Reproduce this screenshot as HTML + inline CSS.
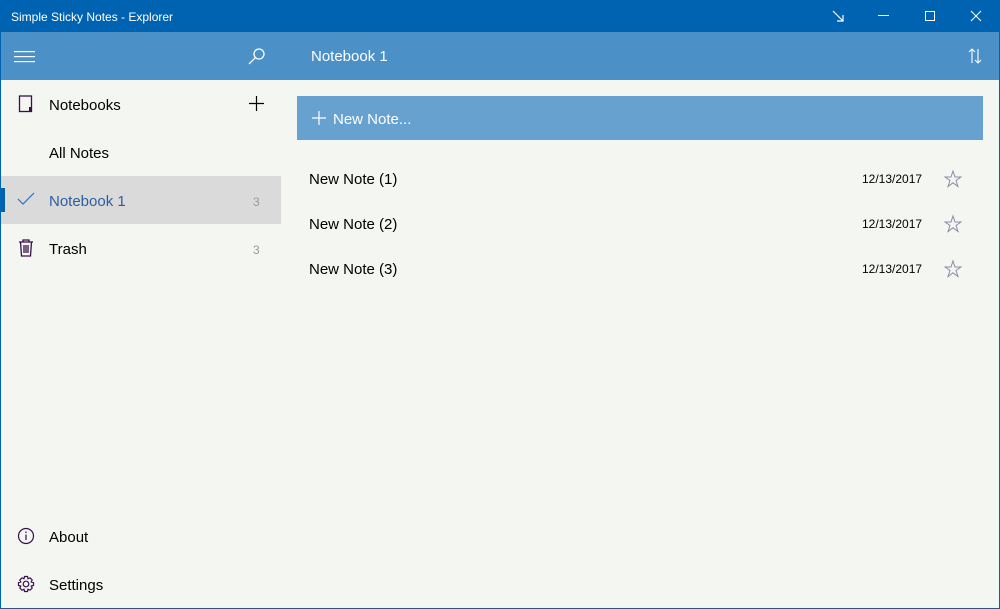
<!DOCTYPE html>
<html><head><meta charset="utf-8"><style>
*{margin:0;padding:0;box-sizing:border-box}
body{width:1000px;height:609px;overflow:hidden;background:#f4f6f2;font-family:"Segoe UI","Liberation Sans",sans-serif;position:relative;color:#000}
.win{position:absolute;left:0;top:0;width:1000px;height:609px;border:1px solid #0063b1;border-top:none}
.title{position:absolute;left:0;top:0;width:1000px;height:32px;background:#0063b1;color:#fff;font-size:12px;line-height:35px;padding-left:11px}
.hdr{position:absolute;left:1px;top:32px;width:998px;height:48px;background:#4b90c7}
.t{position:absolute;font-size:15px;white-space:nowrap}
.sel{position:absolute;left:1px;top:176px;width:280px;height:48px;background:#dadada}
.ind{position:absolute;left:1px;top:188px;width:4px;height:24px;background:#0063b1}
.new{position:absolute;left:297px;top:96px;width:686px;height:44px;background:#66a1d0;color:#fff}
.cnt{position:absolute;font-size:12px;color:#999}
.date{position:absolute;left:862px;font-size:12px}
svg{position:absolute}
</style></head><body>
<div class="title">Simple Sticky Notes - Explorer</div>
<svg style="left:830px;top:8px" width="16" height="16" viewBox="0 0 16 16" fill="none" stroke="#fff" stroke-width="1.2"><path d="M3 3L13 13M7 13H13V7"/></svg>
<svg style="left:878px;top:15px" width="12" height="2"><rect width="11" height="1" fill="#fff"/></svg>
<svg style="left:924px;top:10px" width="12" height="12" viewBox="0 0 12 12" fill="none" stroke="#fff"><rect x="1.5" y="1.5" width="9" height="9"/></svg>
<svg style="left:970px;top:10px" width="12" height="12" viewBox="0 0 12 12" stroke="#fff" stroke-width="1.1"><path d="M1 1L11 11M11 1L1 11"/></svg>
<div class="hdr"></div>
<svg style="left:14px;top:50px" width="22" height="14"><g fill="#fff"><rect y="1" width="21" height="1.2"/><rect y="6" width="21" height="1.2"/><rect y="11" width="21" height="1.2"/></g></svg>
<svg style="left:247px;top:46px" width="20" height="20" viewBox="0 0 20 20" fill="none" stroke="#fff" stroke-width="1.3"><circle cx="12" cy="8" r="5"/><path d="M8.5 11.5L2 18"/></svg>
<div class="t" style="left:311px;top:48px;color:#fff">Notebook 1</div>
<svg style="left:966px;top:47px" width="18" height="18" viewBox="0 0 18 18" fill="none" stroke="#fff" stroke-width="1.1"><path d="M6 16V2M3 5L6 2L9 5M12 2V16M9 13L12 16L15 13"/></svg>
<div class="sel"></div><div class="ind"></div>
<svg style="left:18px;top:95px" width="16" height="18" viewBox="0 0 16 18" fill="none" stroke="#3a0f4a" stroke-width="1.3"><rect x="1.5" y="1" width="12" height="15.5"/><path d="M12 12v4" stroke-width="2"/></svg>
<div class="t" style="left:49px;top:97px">Notebooks</div>
<svg style="left:248px;top:95px" width="17" height="17" viewBox="0 0 17 17" stroke="#000" stroke-width="1.2"><path d="M8.5 1V16M1 8.5H16"/></svg>
<div class="t" style="left:49px;top:145px">All Notes</div>
<svg style="left:17px;top:192px" width="18" height="14" viewBox="0 0 18 14" fill="none" stroke="#2b6fb8" stroke-width="1.2"><path d="M1 7L6 12L17 1"/></svg>
<div class="t" style="left:49px;top:193px;color:#2b5f9e">Notebook 1</div>
<div class="cnt" style="left:253px;top:195px">3</div>
<svg style="left:18px;top:239px" width="16" height="18" viewBox="0 0 16 18" fill="none" stroke="#3a0f4a" stroke-width="1.3"><path d="M1 3H15M5 3V1H11V3M2.5 3L3.5 17H12.5L13.5 3M6 6V14M8 6V14M10 6V14"/></svg>
<div class="t" style="left:49px;top:241px">Trash</div>
<div class="cnt" style="left:253px;top:243px">3</div>
<svg style="left:17px;top:527px" width="18" height="18" viewBox="0 0 18 18" fill="none" stroke="#3a0f4a" stroke-width="1.2"><circle cx="9" cy="9" r="7.5"/><path d="M9 7.5V13M9 4.5V6"/></svg>
<div class="t" style="left:49px;top:529px">About</div>
<svg style="left:17px;top:575px" width="18" height="18" viewBox="0 0 18 18" fill="none" stroke="#3a0f4a" stroke-width="1.2"><circle cx="9" cy="9" r="2.8"/><path d="M7.5 1.5H10.5L11 3.8L13 2.8L15.2 5L14.2 7L16.5 7.5V10.5L14.2 11L15.2 13L13 15.2L11 14.2L10.5 16.5H7.5L7 14.2L5 15.2L2.8 13L3.8 11L1.5 10.5V7.5L3.8 7L2.8 5L5 2.8L7 3.8Z"/></svg>
<div class="t" style="left:49px;top:577px">Settings</div>
<div class="new"></div>
<svg style="left:311px;top:110px" width="16" height="16" viewBox="0 0 16 16" stroke="#fff" stroke-width="1.2"><path d="M8 1V15M1 8H15"/></svg>
<div class="t" style="left:333px;top:111px;color:#fff">New Note...</div>
<div class="t" style="left:309px;top:171px">New Note (1)</div>
<div class="date" style="top:172px">12/13/2017</div>
<div class="t" style="left:309px;top:216px">New Note (2)</div>
<div class="date" style="top:217px">12/13/2017</div>
<div class="t" style="left:309px;top:261px">New Note (3)</div>
<div class="date" style="top:262px">12/13/2017</div>
<svg style="left:944px;top:170px" width="18" height="110" viewBox="0 0 18 110" fill="none" stroke="#8e8aa8" stroke-width="1"><path d="M9 1L11 7H17L12 10.5L14 16.5L9 12.8L4 16.5L6 10.5L1 7H7Z"/><path d="M9 46L11 52H17L12 55.5L14 61.5L9 57.8L4 61.5L6 55.5L1 52H7Z"/><path d="M9 91L11 97H17L12 100.5L14 106.5L9 102.8L4 106.5L6 100.5L1 97H7Z"/></svg>
<div class="win"></div>
</body></html>
